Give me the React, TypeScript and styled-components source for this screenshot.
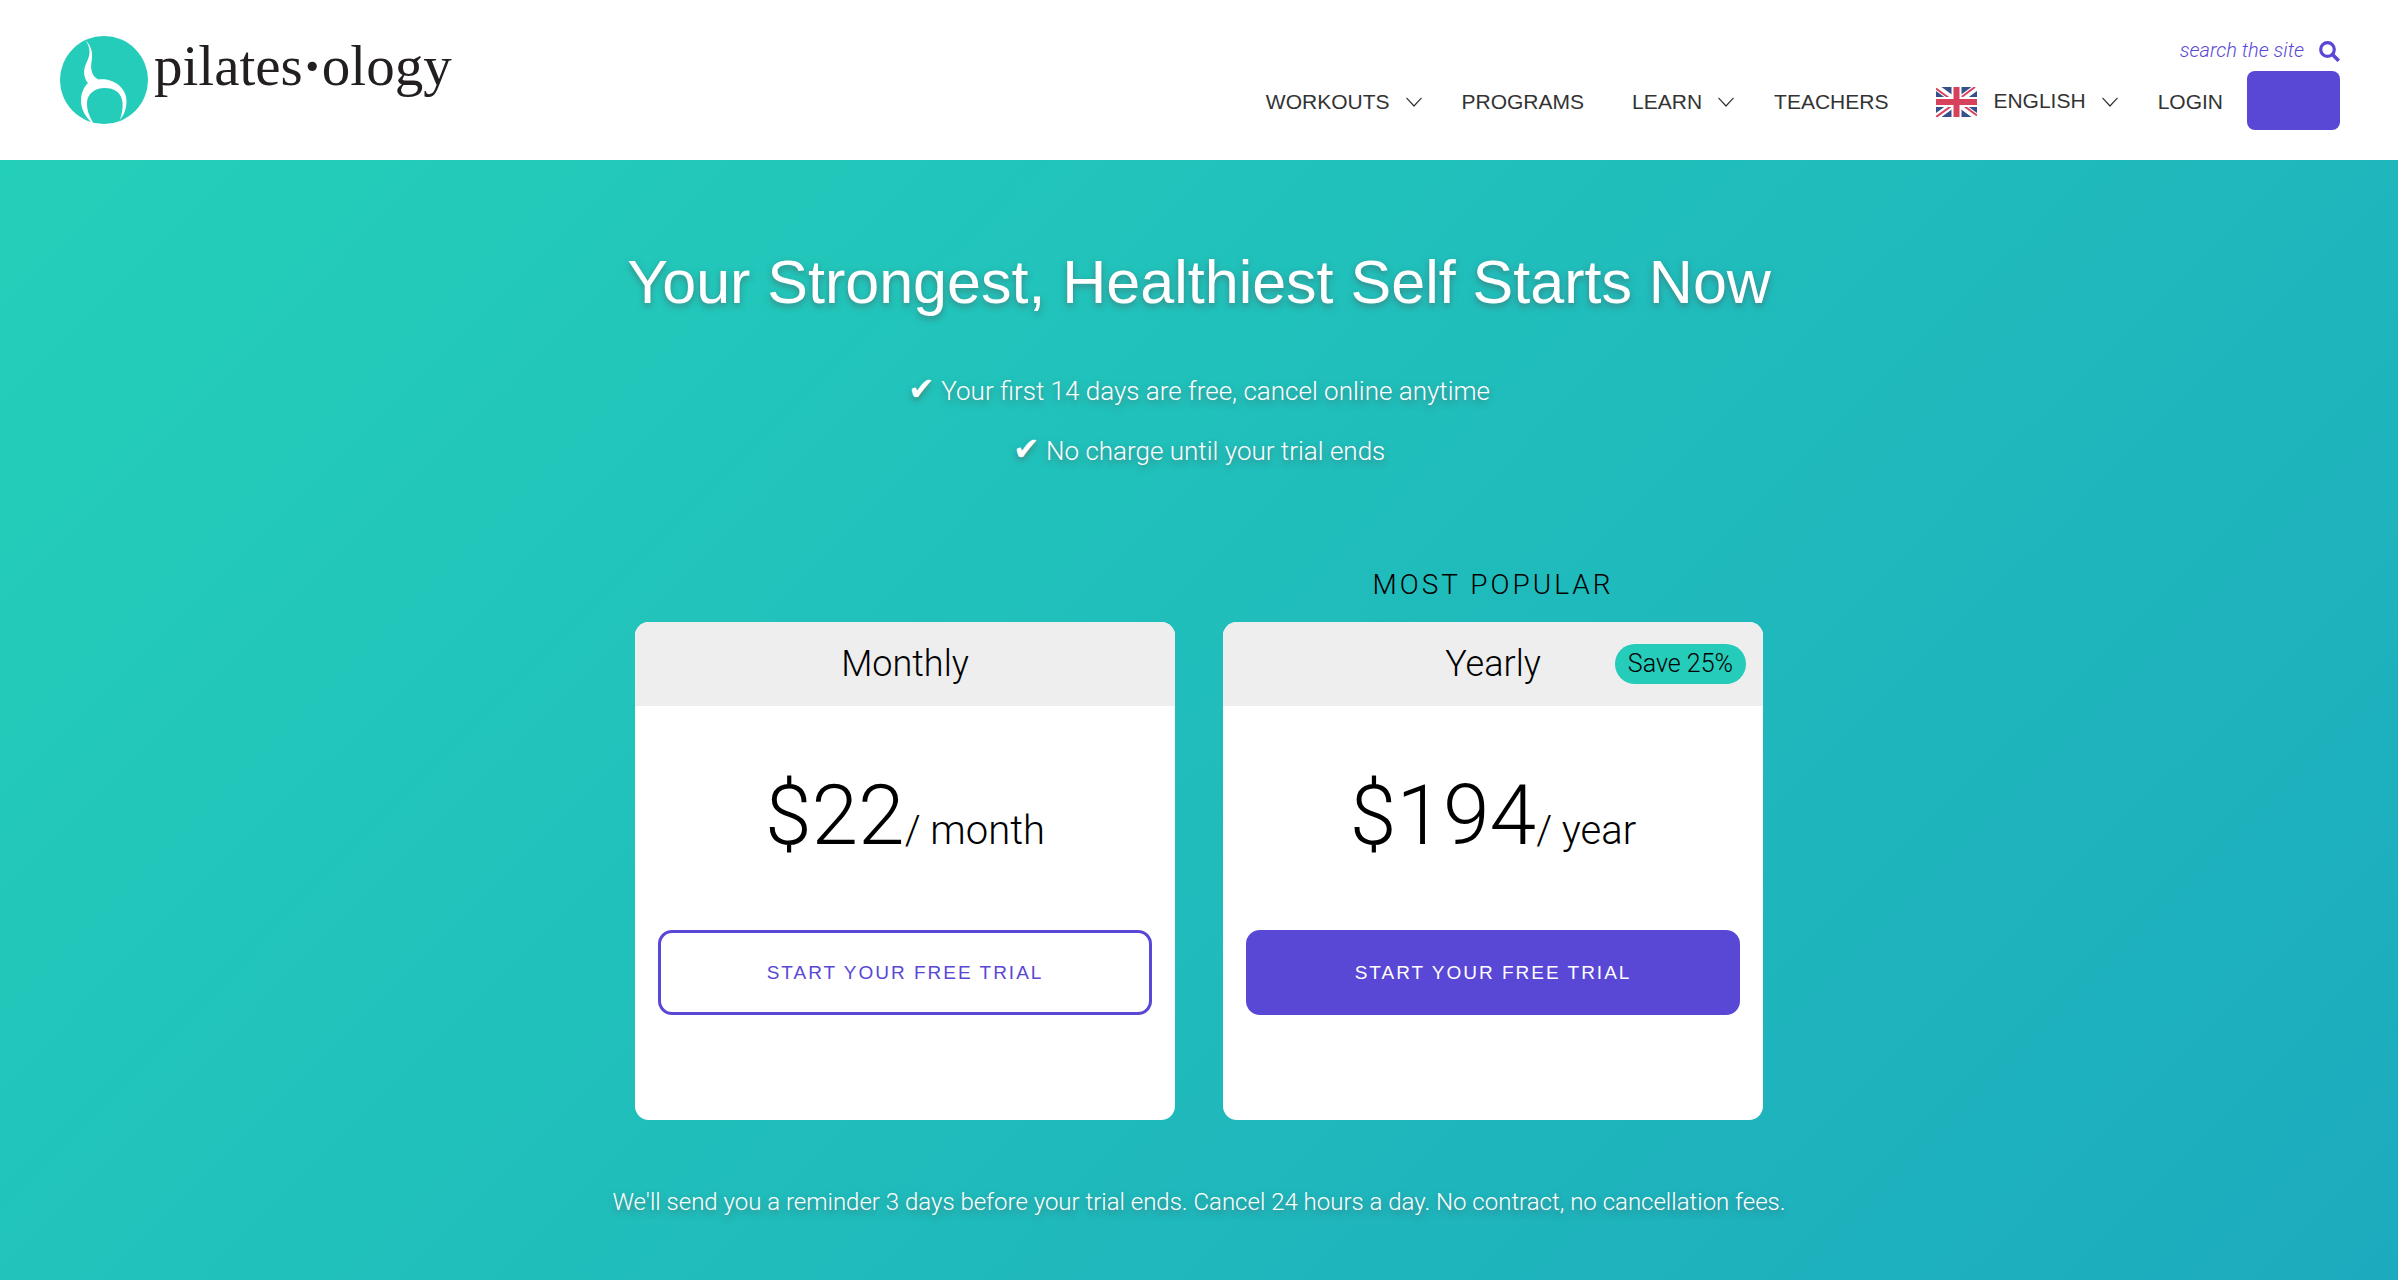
import React from "react";
import styled, { createGlobalStyle, css } from "styled-components";

const sans = `"Liberation Sans", Arial, sans-serif`;
const light = `Roboto, "Liberation Sans", sans-serif`;
const purple = "#5947d6";
const teal = "#24ccb9";

const GlobalStyle = createGlobalStyle`
  *, *::before, *::after { box-sizing: border-box; }
  html, body { margin: 0; min-height: 100%; }
  body { background: #fff; color: #000; font-family: ${sans}; }
  a { color: inherit; text-decoration: none; }
  h1, h2, p, ul { margin: 0; padding: 0; font-weight: inherit; }
`;

const Page = styled.div`
  min-height: 100vh;
  display: flex;
  flex-direction: column;
`;

const Header = styled.header`
  display: flex;
  justify-content: space-between;
  align-items: flex-start;
  padding: 36px 58px 30px 60px;
`;

const Logo = styled.a`
  display: flex;
  gap: 6px;
  color: #231f20;
`;

const LogoMark = styled.svg`
  width: 88px;
  height: 88px;
`;

const LogoText = styled.span`
  font: 57px/60px "Liberation Serif", "Times New Roman", serif;
`;

const HeaderRight = styled.div`
  display: flex;
  flex-direction: column;
  align-items: flex-end;
  gap: 8px;
`;

const Search = styled.form`
  display: flex;
  align-items: center;
  gap: 15px;
  height: 27px;
`;

const SearchInput = styled.input`
  width: 132px;
  padding: 0;
  border: 0;
  outline: 0;
  background: none;
  text-align: right;
  font: italic 300 20px/24px ${light};
  color: ${purple};
  &::placeholder { color: ${purple}; opacity: 1; }
`;

const IconButton = styled.button`
  display: flex;
  align-items: center;
  padding: 3px 0 0;
  border: 0;
  background: none;
  color: ${purple};
  cursor: pointer;
`;

const Nav = styled.nav`
  display: flex;
  align-items: center;
`;

const NavList = styled.ul`
  display: flex;
  align-items: center;
  gap: 40px;
  margin-right: 16px;
  list-style: none;
`;

const NavLink = styled.a<{ $menu?: boolean }>`
  display: flex;
  align-items: center;
  gap: 16px;
  padding: 3px ${(p) => (p.$menu ? 0 : 8)}px 0 0;
  font-size: 21px;
  line-height: 28px;
  color: #333;
`;

const LanguageName = styled.span`
  padding-bottom: 3px;
`;

const Flag = styled.svg`
  width: 41px;
  height: 30px;
`;

const TrialLink = styled.a`
  width: 93px;
  height: 59px;
  border-radius: 8px;
  background: ${purple};
`;

const Hero = styled.main`
  flex: 1;
  display: flex;
  flex-direction: column;
  align-items: center;
  padding: 84px 24px 48px;
  background: linear-gradient(135deg, #24cfb9, #1cabbe);
`;

const shadow = css`
  color: #fff;
  text-shadow: 0 3px 6px rgba(80, 80, 80, 0.5);
`;

const Title = styled.h1`
  ${shadow}
  font-size: 61px;
  line-height: 76px;
  text-align: center;
`;

const Perks = styled.ul`
  ${shadow}
  margin-top: 41px;
  list-style: none;
  text-align: center;
  font: 300 26px/60px ${light};
`;

const Tick = styled.span`
  font-size: 32px;
  line-height: 32px;
`;

const Plans = styled.section`
  display: flex;
  flex-wrap: wrap;
  justify-content: center;
  align-items: flex-end;
  gap: 48px;
  margin-top: 84px;
`;

const Plan = styled.article`
  display: flex;
  flex-direction: column;
  width: 540px;
`;

const PlanTag = styled.p`
  padding-bottom: 17px;
  text-align: center;
  font: 300 28px/40px ${light};
  letter-spacing: 3px;
`;

const Card = styled.div`
  overflow: hidden;
  border-radius: 14px;
  background: #fff;
`;

const CardHead = styled.div`
  position: relative;
  background: #eee;
  text-align: center;
`;

const CardName = styled.h2`
  font: 300 36px/84px ${light};
`;

const Badge = styled.span`
  position: absolute;
  top: 22px;
  right: 17px;
  padding: 0 13px;
  border-radius: 20px;
  background: ${teal};
  font: 300 25px/40px ${light};
`;

const CardBody = styled.div`
  padding: 56px 23px 105px;
`;

const Price = styled.p`
  text-align: center;
  font: 300 84px/108px ${light};
`;

const Unit = styled.span`
  font-size: 40px;
`;

const Start = styled.button<{ $filled: boolean }>`
  width: 100%;
  height: 85px;
  margin-top: 45px;
  border: 3px solid ${purple};
  border-radius: 14px;
  background: ${(p) => (p.$filled ? purple : "#fff")};
  color: ${(p) => (p.$filled ? "#fff" : purple)};
  font: 19px/28px ${sans};
  letter-spacing: 2px;
  cursor: pointer;
`;

const Note = styled.p`
  ${shadow}
  margin-top: 64px;
  text-align: center;
  font: 300 24px/36px ${light};
`;

const Chevron = () => (
  <svg width="16" height="10" viewBox="0 0 16 10" fill="none" stroke="#333" strokeWidth="1.2" aria-hidden="true">
    <path d="M0.5 0.8 8 9l7.500-8.200" />
  </svg>
);

const UnionJack = () => (
  <Flag viewBox="0 0 41 30" aria-hidden="true">
    <path fill="#36508c" d="M0 0h41v30H0z" />
    <path stroke="#fff" strokeWidth="6.500" d="m0 0 41 30M41 0 0 30" />
    <path stroke="#d8415c" strokeWidth="2" d="m0 1.500 15 11M41 28.500 26 17.500M39 0 25 10.500M0 30l16-11.500" />
    <path stroke="#fff" strokeWidth="10" d="M20.500 0v30M0 15h41" />
    <path stroke="#d8415c" strokeWidth="6" d="M20.500 0v30M0 15h41" />
  </Flag>
);

const links = [
  { label: "WORKOUTS", menu: true },
  { label: "PROGRAMS" },
  { label: "LEARN", menu: true },
  { label: "TEACHERS" },
  { label: "ENGLISH", menu: true, flag: true },
  { label: "LOGIN" },
];

const perks = ["Your first 14 days are free, cancel online anytime", "No charge until your trial ends"];

const plans = [
  { name: "Monthly", price: "$22", unit: "/ month", filled: false },
  { name: "Yearly", price: "$194", unit: "/ year", filled: true, tag: "MOST POPULAR", badge: "Save 25%" },
];

export default function App() {
  return (
    <Page>
      <GlobalStyle />
      <Header>
        <Logo href="#">
          <LogoMark viewBox="0 0 88 88" aria-hidden="true">
            <circle cx="44" cy="44" r="44" fill={teal} />
            <path
              fill="#fff"
              d="M25.500 4.500C30 8.500 32.500 14 32 21c-.3 5-1.500 9-.5 13.500 1 4.500 3.500 7.500 7 9 12-2 27.500 6 28 21 .2 8-2.500 15-7.500 20.500L60 83.500c2-6 3-11 2.500-17C61.500 56.500 54.500 52 44.500 52 35 52 27.500 57.500 27 66.500c-.3 7 2 13.500 6 20l-2-.6C24.500 79.500 21 72.500 21 64.500c0-7.500 3-13.500 7-17.500-3.500-4-4.500-9-3.500-14.500 1-5 4.500-9.500 5-15.500.3-4.500-1-8.500-4-12.500z"
            />
          </LogoMark>
          <LogoText>pilates<b>·</b>ology</LogoText>
        </Logo>
        <HeaderRight>
          <Search role="search" onSubmit={(e) => e.preventDefault()}>
            <SearchInput aria-label="search the site" placeholder="search the site" />
            <IconButton type="submit" aria-label="Search">
              <svg width="21" height="21" viewBox="0 0 21 21" fill="none" stroke="currentColor" aria-hidden="true">
                <circle cx="8.500" cy="8.500" r="6.800" strokeWidth="3.200" />
                <path d="m13.500 13.500 6.300 6.300" strokeWidth="3.600" />
              </svg>
            </IconButton>
          </Search>
          <Nav>
            <NavList>
              {links.map((l) => (
                <li key={l.label}>
                  <NavLink href="#" $menu={l.menu}>
                    {l.flag && <UnionJack />}
                    {l.flag ? <LanguageName>{l.label}</LanguageName> : l.label}
                    {l.menu && <Chevron />}
                  </NavLink>
                </li>
              ))}
            </NavList>
            <TrialLink href="#" aria-label="Start free trial" />
          </Nav>
        </HeaderRight>
      </Header>
      <Hero>
        <Title>Your Strongest, Healthiest Self Starts Now</Title>
        <Perks>
          {perks.map((perk) => (
            <li key={perk}>
              <Tick>✔</Tick> {perk}
            </li>
          ))}
        </Perks>
        <Plans>
          {plans.map((p) => (
            <Plan key={p.name}>
              {p.tag && <PlanTag>{p.tag}</PlanTag>}
              <Card>
                <CardHead>
                  <CardName>{p.name}</CardName>
                  {p.badge && <Badge>{p.badge}</Badge>}
                </CardHead>
                <CardBody>
                  <Price>
                    {p.price}
                    <Unit>{p.unit}</Unit>
                  </Price>
                  <Start type="button" $filled={p.filled}>START YOUR FREE TRIAL</Start>
                </CardBody>
              </Card>
            </Plan>
          ))}
        </Plans>
        <Note>
          We'll send you a reminder 3 days before your trial ends. Cancel 24 hours a day. No contract, no cancellation fees.
        </Note>
      </Hero>
    </Page>
  );
}
